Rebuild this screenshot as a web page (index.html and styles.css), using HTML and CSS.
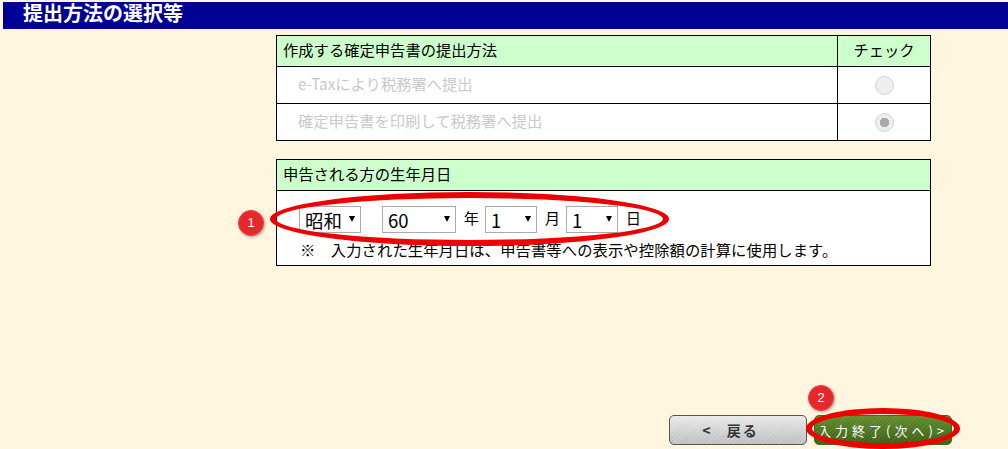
FILE: index.html
```html
<!DOCTYPE html>
<html lang="ja">
<head>
  <meta charset="UTF-8">
  <title>提出方法の選択等</title>
  <link rel="stylesheet" href="styles.css">
</head>
<body>
  <h1 class="page-title">提出方法の選択等</h1>

  <main class="content">
    <table class="panel method-table">
      <tr class="head">
        <th>作成する確定申告書の提出方法</th>
        <th class="check-col">チェック</th>
      </tr>
      <tr>
        <td class="disabled">e-Taxにより税務署へ提出</td>
        <td class="check-col"><span class="radio"></span></td>
      </tr>
      <tr>
        <td class="disabled">確定申告書を印刷して税務署へ提出</td>
        <td class="check-col"><span class="radio checked"></span></td>
      </tr>
    </table>

    <table class="panel birth-table">
      <tr class="head">
        <th>申告される方の生年月日</th>
      </tr>
      <tr>
        <td class="birth-cell">
          <div class="date-row">
            <span class="select era"><select><option>昭和</option></select></span>
            <span class="select year"><select><option>60</option></select></span>
            <span class="unit">年</span>
            <span class="select day"><select><option>1</option></select></span>
            <span class="unit">月</span>
            <span class="select day"><select><option>1</option></select></span>
            <span class="unit">日</span>
          </div>
          <p class="note">※　入力された生年月日は、申告書等への表示や控除額の計算に使用します。</p>
        </td>
      </tr>
    </table>
  </main>

  <footer class="actions">
    <button class="btn btn-back">&lt; 戻る</button>
    <button class="btn btn-next">入力終了(次へ)&gt;</button>
  </footer>

  <!-- callouts drawn over the page -->
  <div class="ring ring-date"></div>
  <div class="ring ring-next"></div>
  <div class="badge badge-date">1</div>
  <div class="badge badge-next">2</div>
</body>
</html>
```

FILE: styles.css
```css
html, body {
  height: 100%;
}

body {
  margin: 0;
  padding-top: 2px;
  box-sizing: border-box;
  height: 449px;
  overflow: hidden;
  position: relative;
  background: #fff6df;
  font-family: "Noto Sans CJK JP", sans-serif;
  font-size: 15.3px;
  color: #000;
  display: flex;
  flex-direction: column;
}

.page-title {
  margin: 0 0 0 3px;
  height: 27px;
  line-height: 22px;
  padding-left: 20px;
  background: #000094;
  color: #fff;
  font-size: 20px;
  font-weight: bold;
}

.content {
  margin: 6px 77px 0 276px;
  display: flex;
  flex-direction: column;
  gap: 18px;
}

.panel {
  width: 655px;
  border-collapse: collapse;
  background: #fff;
  border: 1px solid #000;
}

.panel th,
.panel td {
  border: 1px solid #000;
  padding: 0 6px;
  font-weight: normal;
  text-align: left;
  line-height: 20px;
  box-sizing: border-box;
}

.head th {
  height: 31px;
  padding-bottom: 4px;
  background: #ccffcc;
}

.method-table td {
  height: 37px;
  padding-bottom: 5px;
}

.panel .disabled {
  padding-left: 21px;
  color: #c9c9c9;
}

.panel .check-col {
  width: 93px;
  text-align: center;
}

.radio {
  display: inline-block;
  box-sizing: border-box;
  width: 19px;
  height: 19px;
  margin-top: 5px;
  border: 1px solid #d4d4d4;
  border-radius: 50%;
  background: #eeeeee;
  vertical-align: middle;
}

.radio.checked {
  background: radial-gradient(circle, #a9a9a9 0 4.5px, #eeeeee 5px);
}

.panel .birth-cell {
  height: 75px;
  padding-top: 14px;
  vertical-align: top;
}

.date-row {
  display: flex;
  align-items: center;
  margin-left: 16px;
  height: 28px;
}

.select {
  position: relative;
  display: block;
  height: 27px;
}

.select select {
  appearance: none;
  box-sizing: border-box;
  width: 100%;
  height: 27px;
  padding: 0 0 0 5px;
  border: 1px solid #aaaaaa;
  border-radius: 0;
  background: #fff;
  font-family: inherit;
  font-size: 18.5px;
  color: #000;
}

.select::after {
  content: "";
  position: absolute;
  right: 6px;
  top: 10px;
  border-left: 3.5px solid transparent;
  border-right: 3.5px solid transparent;
  border-top: 6px solid #000;
}

.era { width: 62px; margin-right: 21px; }
.year { width: 74px; }
.day { width: 52px; }

.unit {
  width: 27px;
  padding-left: 2px;
  text-align: center;
  margin-top: -4px;
}

.note {
  margin: 6px 0 0 17px;
  line-height: 20px;
  letter-spacing: .1px;
}

.actions {
  position: absolute;
  left: 669px;
  top: 415px;
  display: flex;
  gap: 7px;
}

.btn {
  width: 138px;
  height: 30px;
  padding: 0;
  border-radius: 5px;
  font-family: inherit;
  font-size: 13px;
  letter-spacing: 4px;
}

.btn-back {
  border: 1px solid #555;
  padding-right: 15px;
  background: repeating-linear-gradient(135deg, rgba(255, 255, 255, .18) 0 1px, transparent 1px 3px),
    linear-gradient(#e9e9e9, #bdbdbd);
  color: #333;
  font-size: 14px;
  font-weight: bold;
  letter-spacing: 2px;
  word-spacing: 9px;
}

.btn-next {
  border: 1px solid #44651b;
  background: repeating-linear-gradient(135deg, rgba(255, 255, 255, .08) 0 1px, transparent 1px 3px),
    linear-gradient(#628c2e, #3a5f12);
  color: #fff;
}

.ring {
  position: absolute;
  box-sizing: border-box;
  border: 6px solid #ee0000;
  border-radius: 50%;
}

.ring-date {
  left: 270px;
  top: 192px;
  width: 399px;
  height: 54px;
}

.ring-next {
  left: 806px;
  top: 408px;
  width: 154px;
  height: 41px;
}

.badge {
  position: absolute;
  box-sizing: border-box;
  width: 26px;
  height: 26px;
  border-radius: 50%;
  border: 1px solid #f04040;
  background: #e5282c;
  box-shadow: 1px 1px 3px rgba(0, 0, 0, .35);
  color: #fff;
  font-family: "Liberation Sans", sans-serif;
  font-size: 13px;
  font-weight: normal;
  line-height: 24px;
  text-align: center;
}

.badge-date { left: 238px; top: 210px; }
.badge-next { left: 808px; top: 385px; }
```
